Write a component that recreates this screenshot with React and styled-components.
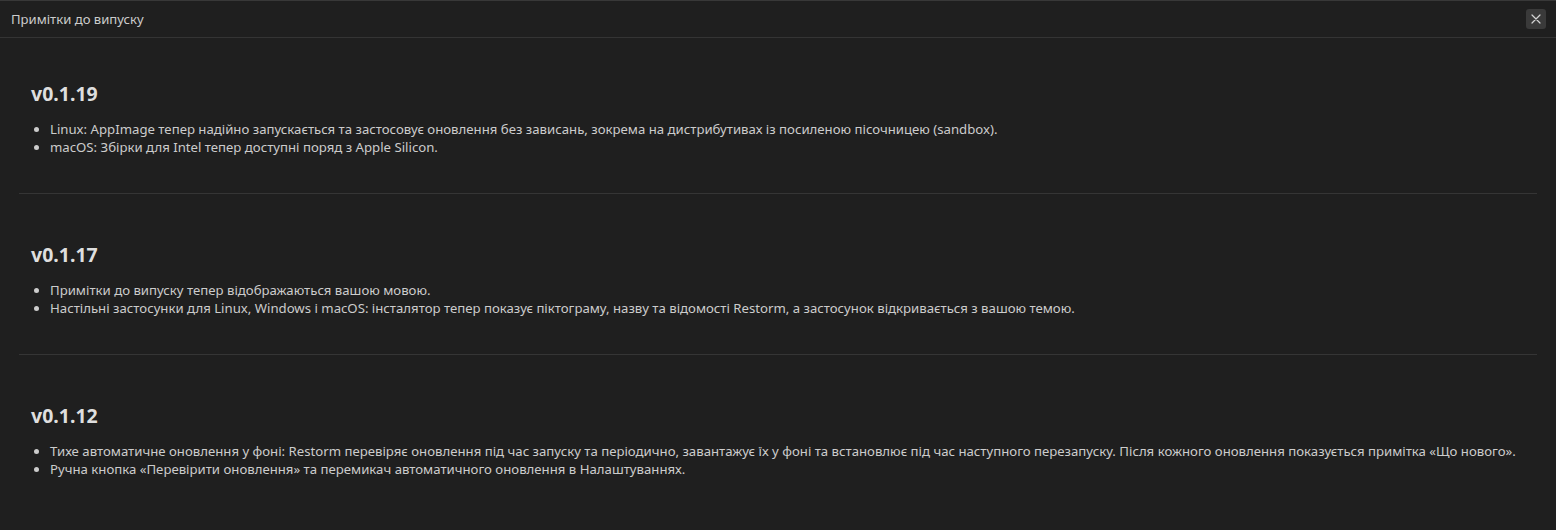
import React from 'react'
import styled, { createGlobalStyle } from 'styled-components'

const releases = [
  {
    version: 'v0.1.19',
    notes: [
      'Linux: AppImage тепер надійно запускається та застосовує оновлення без зависань, зокрема на дистрибутивах із посиленою пісочницею (sandbox).',
      'macOS: Збірки для Intel тепер доступні поряд з Apple Silicon.',
    ],
  },
  {
    version: 'v0.1.17',
    notes: [
      'Примітки до випуску тепер відображаються вашою мовою.',
      'Настільні застосунки для Linux, Windows і macOS: інсталятор тепер показує піктограму, назву та відомості Restorm, а застосунок відкривається з вашою темою.',
    ],
  },
  {
    version: 'v0.1.12',
    notes: [
      'Тихе автоматичне оновлення у фоні: Restorm перевіряє оновлення під час запуску та періодично, завантажує їх у фоні та встановлює під час наступного перезапуску. Після кожного оновлення показується примітка «Що нового».',
      'Ручна кнопка «Перевірити оновлення» та перемикач автоматичного оновлення в Налаштуваннях.',
    ],
  },
]

const App = () => {
  return (
    <>
      <GlobalStyle />
      <Panel>
        <Header>
          <Title>Примітки до випуску</Title>
          <CloseButton aria-label="close">
            <svg width="10" height="10" viewBox="0 0 10 10">
              <path d="M1 1L9 9M9 1L1 9" stroke="currentColor" strokeWidth="1.2" strokeLinecap="round" />
            </svg>
          </CloseButton>
        </Header>
        <Content>
          {releases.map((r) => (
            <Release key={r.version}>
              <Version>{r.version}</Version>
              <Notes>
                {r.notes.map((n, i) => (
                  <li key={i}>{n}</li>
                ))}
              </Notes>
            </Release>
          ))}
        </Content>
      </Panel>
    </>
  )
}

const GlobalStyle = createGlobalStyle`
  html, body {
    margin: 0;
    padding: 0;
    background: #1f1f1f;
  }
  body {
    font-family: "Noto Sans", "Open Sans", sans-serif;
  }
`

const Panel = styled.div`
  height: 530px;
  background: #1f1f1f;
  border-top: 1px solid #383838;
  box-sizing: border-box;
  color: #cccccc;
`

const Header = styled.div`
  height: 36px;
  display: flex;
  align-items: center;
  justify-content: space-between;
  padding: 0 10px 0 11px;
  border-bottom: 1px solid #343434;
`

const Title = styled.div`
  font-size: 13.1px;
  color: #cccccc;
`

const CloseButton = styled.button`
  width: 20px;
  height: 20px;
  padding: 0;
  border: none;
  border-radius: 3px;
  background: #3a3a3a;
  color: #d4d4d4;
  display: flex;
  align-items: center;
  justify-content: center;
  cursor: pointer;
`

const Content = styled.div`
  padding: 0 19px;
`

const Release = styled.section`
  padding: 48px 12px 37px;
  border-bottom: 1px solid #353535;
  &:first-child {
    padding-top: 43px;
  }
  &:last-child {
    border-bottom: none;
  }
`

const Version = styled.h2`
  margin: 0;
  font-size: 19.5px;
  line-height: 26px;
  font-weight: 700;
  color: #dedede;
`

const Notes = styled.ul`
  margin: 13px 0 0;
  padding-left: 19px;
  font-size: 13.2px;
  line-height: 18px;
  color: #cccccc;
`

export default App
